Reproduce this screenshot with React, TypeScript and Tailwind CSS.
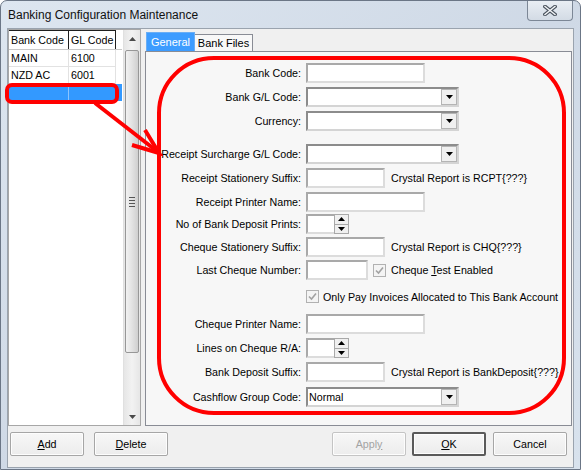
import React from "react";

/* ---------- small win32-ish controls ---------- */

const TextBox = ({ w }: { w: string }) => (
  <div className={`${w} h-[20px] bg-white border-2 border-t-[#a9a9a9] border-l-[#a9a9a9] border-r-[#dcdcdc] border-b-[#dcdcdc]`} />
);

const Arrow = ({ up = false }: { up?: boolean }) => (
  <svg width="7" height="4" viewBox="0 0 7 4">
    <path d={up ? "M0 4 L3.5 0 L7 4 Z" : "M0 0 L7 0 L3.5 4 Z"} fill="#000" />
  </svg>
);

const Combo = ({ value = "" }: { value?: string }) => (
  <div className="w-[153px] h-[20px] bg-white flex items-stretch border-2 border-t-[#8c8c8c] border-l-[#8c8c8c] border-r-[#d4d4d4] border-b-[#d4d4d4]">
    <div className="flex-1 pl-[1px] leading-[16px]">{value}</div>
    <div className="w-[16px] bg-[#f0f0f0] border border-[#b4b4b4] flex items-center justify-center">
      <Arrow />
    </div>
  </div>
);

const Spinner = () => (
  <div className="flex h-[20px]">
    <div className="w-[28px] h-[20px] bg-white border-2 border-t-[#a9a9a9] border-l-[#a9a9a9] border-r-0 border-b-[#dcdcdc]" />
    <div className="w-[15px] flex flex-col border border-[#a9a9a9]">
      <div className="flex-1 bg-[#f0f0f0] border-b border-[#a9a9a9] flex items-center justify-center">
        <Arrow up />
      </div>
      <div className="flex-1 bg-[#f0f0f0] flex items-center justify-center">
        <Arrow />
      </div>
    </div>
  </div>
);

const CheckBox = () => (
  <div className="w-[13px] h-[13px] border border-[#b1b1b1] bg-[#f4f4f4] flex items-center justify-center">
    <svg width="9" height="9" viewBox="0 0 9 9">
      <path d="M1 4.5 L3.5 7 L8 1.5" fill="none" stroke="#a2a2a2" strokeWidth="1.6" />
    </svg>
  </div>
);

const Note = ({ children }: { children: React.ReactNode }) => (
  <span className="ml-[6px] whitespace-nowrap">{children}</span>
);

/* ---------- form rows ---------- */

const rows: { label: string; mt: string; ctl: React.ReactNode }[] = [
  { label: "Bank Code:", mt: "mt-[11px]", ctl: <TextBox w="w-[119px]" /> },
  { label: "Bank G/L Code:", mt: "mt-[4px]", ctl: <Combo /> },
  { label: "Currency:", mt: "mt-[4px]", ctl: <Combo /> },
  { label: "Receipt Surcharge G/L Code:", mt: "mt-[13px]", ctl: <Combo /> },
  {
    label: "Receipt Stationery Suffix:",
    mt: "mt-[4px]",
    ctl: (
      <>
        <TextBox w="w-[79px]" />
        <Note>Crystal Report is RCPT{"{???}"}</Note>
      </>
    ),
  },
  { label: "Receipt Printer Name:", mt: "mt-[4px]", ctl: <TextBox w="w-[119px]" /> },
  { label: "No of Bank Deposit Prints:", mt: "mt-[2px]", ctl: <Spinner /> },
  {
    label: "Cheque Stationery Suffix:",
    mt: "mt-[3px]",
    ctl: (
      <>
        <TextBox w="w-[79px]" />
        <Note>Crystal Report is CHQ{"{???}"}</Note>
      </>
    ),
  },
  {
    label: "Last Cheque Number:",
    mt: "mt-[3px]",
    ctl: (
      <>
        <TextBox w="w-[62px]" />
        <div className="ml-[5px]">
          <CheckBox />
        </div>
        <span className="ml-[5px] whitespace-nowrap">
          Cheque <u>T</u>est Enabled
        </span>
      </>
    ),
  },
  {
    label: "",
    mt: "mt-[7px]",
    ctl: (
      <>
        <CheckBox />
        <span className="ml-[4px] whitespace-nowrap">Only Pay Invoices Allocated to This Bank Account</span>
      </>
    ),
  },
  { label: "Cheque Printer Name:", mt: "mt-[7px]", ctl: <TextBox w="w-[119px]" /> },
  { label: "Lines on Cheque R/A:", mt: "mt-[4px]", ctl: <Spinner /> },
  {
    label: "Bank Deposit Suffix:",
    mt: "mt-[4px]",
    ctl: (
      <>
        <TextBox w="w-[79px]" />
        <Note>Crystal Report is BankDeposit{"{???}"}</Note>
      </>
    ),
  },
  { label: "Cashflow Group Code:", mt: "mt-[5px]", ctl: <Combo value="Normal" /> },
];

const banks = [
  { code: "MAIN", gl: "6100" },
  { code: "NZD AC", gl: "6001" },
];

const Button = ({
  children,
  kind = "normal",
  className = "",
}: {
  children: React.ReactNode;
  kind?: "normal" | "default" | "disabled";
  className?: string;
}) => {
  const look =
    kind === "default"
      ? "border-2 border-[#5a5a5a] text-black"
      : kind === "disabled"
      ? "border border-[#c4c4c4] text-[#a3a3a3]"
      : "border border-[#a6a6a6] text-black";
  return (
    <div
      className={`w-[74px] h-[24px] rounded-[2px] bg-gradient-to-b from-[#f7f7f7] to-[#ececec] flex items-center justify-center shadow-[inset_0_0_0_1px_#fdfdfd] ${look} ${className}`}
    >
      {children}
    </div>
  );
};

export default function App() {
  return (
    <div className="w-[581px] h-[470px] relative overflow-hidden rounded-t-[7px] border border-[#6b7686] bg-gradient-to-br from-[#dde6f0] via-[#cfd9e6] to-[#d8e2ed] font-['Liberation_Sans',Arial,sans-serif] text-[10.7px] text-black">
      {/* title bar */}
      <div className="h-[27px] flex items-center pl-[7px] text-[12px] text-[#111]">
        Banking Configuration Maintenance
      </div>
      <div className="absolute top-0 right-[7px] w-[46px] h-[20px] rounded-b-[4px] border border-t-0 border-[#7c8796] bg-gradient-to-b from-[#e9eef4] to-[#d3dbe5] flex items-center justify-center">
        <svg width="14" height="11" viewBox="0 0 14 11">
          <path d="M2 1.5 L12 9.5 M12 1.5 L2 9.5" stroke="#4c5560" strokeWidth="3.6" strokeLinecap="square" />
          <path d="M2 1.5 L12 9.5 M12 1.5 L2 9.5" stroke="#f4f6f8" strokeWidth="1.4" strokeLinecap="square" />
        </svg>
      </div>

      {/* client area */}
      <div className="ml-[6px] w-[567px] h-[440px] border border-[#9aa3ae] bg-[#f0f0f0] flex flex-col">
        <div className="flex h-[397px]">
          {/* bank list */}
          <div className="w-[133px] h-[397px] bg-white border border-[#a7a7a7] flex">
            <div className="w-[114px]">
              <div className="flex h-[20px] border-b border-[#c8c8c8]">
                <div className="w-[60px] border-t border-r border-[#1e1e1e] pl-[2px] leading-[19px]">Bank Code</div>
                <div className="w-[47px] border-t border-r border-[#1e1e1e] pl-[2px] leading-[19px]">GL Code</div>
              </div>
              {banks.map((b) => (
                <div key={b.code} className="flex h-[17px]">
                  <div className="w-[60px] border-r border-b border-[#e2e2e2] pl-[2px] leading-[17px]">{b.code}</div>
                  <div className="w-[47px] border-r border-b border-[#e2e2e2] pl-[2px] leading-[17px]">{b.gl}</div>
                </div>
              ))}
              <div className="flex h-[17px] bg-[#3399ff]">
                <div className="w-[60px] border-r border-[#8cc4ff]" />
                <div className="w-[47px]" />
              </div>
            </div>
            {/* scrollbar */}
            <div className="w-[17px] ml-[1px] bg-gradient-to-r from-[#e6e6e6] via-[#f2f2f2] to-[#e6e6e6] flex flex-col items-center border-l border-[#e0e0e0]">
              <div className="h-[17px] flex items-center justify-center">
                <svg width="7" height="4" viewBox="0 0 7 4">
                  <path d="M0 4 L3.5 0 L7 4 Z" fill="#4a4a4a" />
                </svg>
              </div>
              <div className="mt-[3px] w-[14px] h-[303px] rounded-[2px] border border-[#979797] bg-gradient-to-r from-[#f2f2f2] via-[#e2e2e2] to-[#cfcfcf] flex flex-col items-center justify-center gap-[2px]">
                <div className="w-[6px] h-[1px] bg-[#555]" />
                <div className="w-[6px] h-[1px] bg-[#555]" />
                <div className="w-[6px] h-[1px] bg-[#555]" />
                <div className="w-[6px] h-[1px] bg-[#555]" />
              </div>
              <div className="mt-auto h-[17px] flex items-center justify-center">
                <svg width="7" height="4" viewBox="0 0 7 4">
                  <path d="M0 0 L7 0 L3.5 4 Z" fill="#4a4a4a" />
                </svg>
              </div>
            </div>
          </div>

          {/* tab control */}
          <div className="ml-[4px] w-[427px] flex flex-col">
            <div className="h-[22px] flex items-end pl-[1px]">
              <div className="w-[49px] h-[19px] bg-[#3d9cff] text-white text-[11px] flex items-center justify-center border border-b-0 border-[#6aaef5]">
                General
              </div>
              <div className="w-[58px] h-[17px] bg-[#f8f8f8] border border-b-0 border-l-0 border-[#898c95] flex items-center justify-center text-[11px]">
                Bank Files
              </div>
            </div>
            <div className="flex-1 bg-[#f7f7f7] border border-[#898c95] flex flex-col">
              {rows.map((r, i) => (
                <div key={i} className={`flex items-center h-[20px] ${r.mt}`}>
                  <div className="w-[155px] text-right whitespace-nowrap">{r.label}</div>
                  <div className="ml-[5px] flex items-center">{r.ctl}</div>
                </div>
              ))}
            </div>
          </div>
        </div>

        {/* buttons */}
        <div className="flex mt-[6px] pl-[2px] pr-[6px]">
          <Button>
            <u>A</u>dd
          </Button>
          <Button className="ml-[10px]">
            <u>D</u>elete
          </Button>
          <Button kind="disabled" className="ml-auto">
            Appl<u>y</u>
          </Button>
          <Button kind="default" className="ml-[6px]">
            <u>O</u>K
          </Button>
          <Button className="ml-[7px]">Cancel</Button>
        </div>
      </div>

      {/* red annotations drawn over the dialog */}
      <svg className="absolute inset-0 pointer-events-none" width="581" height="470" viewBox="0 0 581 470">
        <rect x="6" y="84" width="110" height="17" rx="5" fill="none" stroke="#ff0000" strokeWidth="4" />
        <path d="M94 102 L157 151" stroke="#ff0000" strokeWidth="4" fill="none" />
        <path d="M144 129 L158 152 L131 144" stroke="#ff0000" strokeWidth="4" fill="none" strokeLinejoin="miter" />
        <rect x="158" y="57" width="405" height="355" rx="55" fill="none" stroke="#ff0000" strokeWidth="4" />
      </svg>
    </div>
  );
}
